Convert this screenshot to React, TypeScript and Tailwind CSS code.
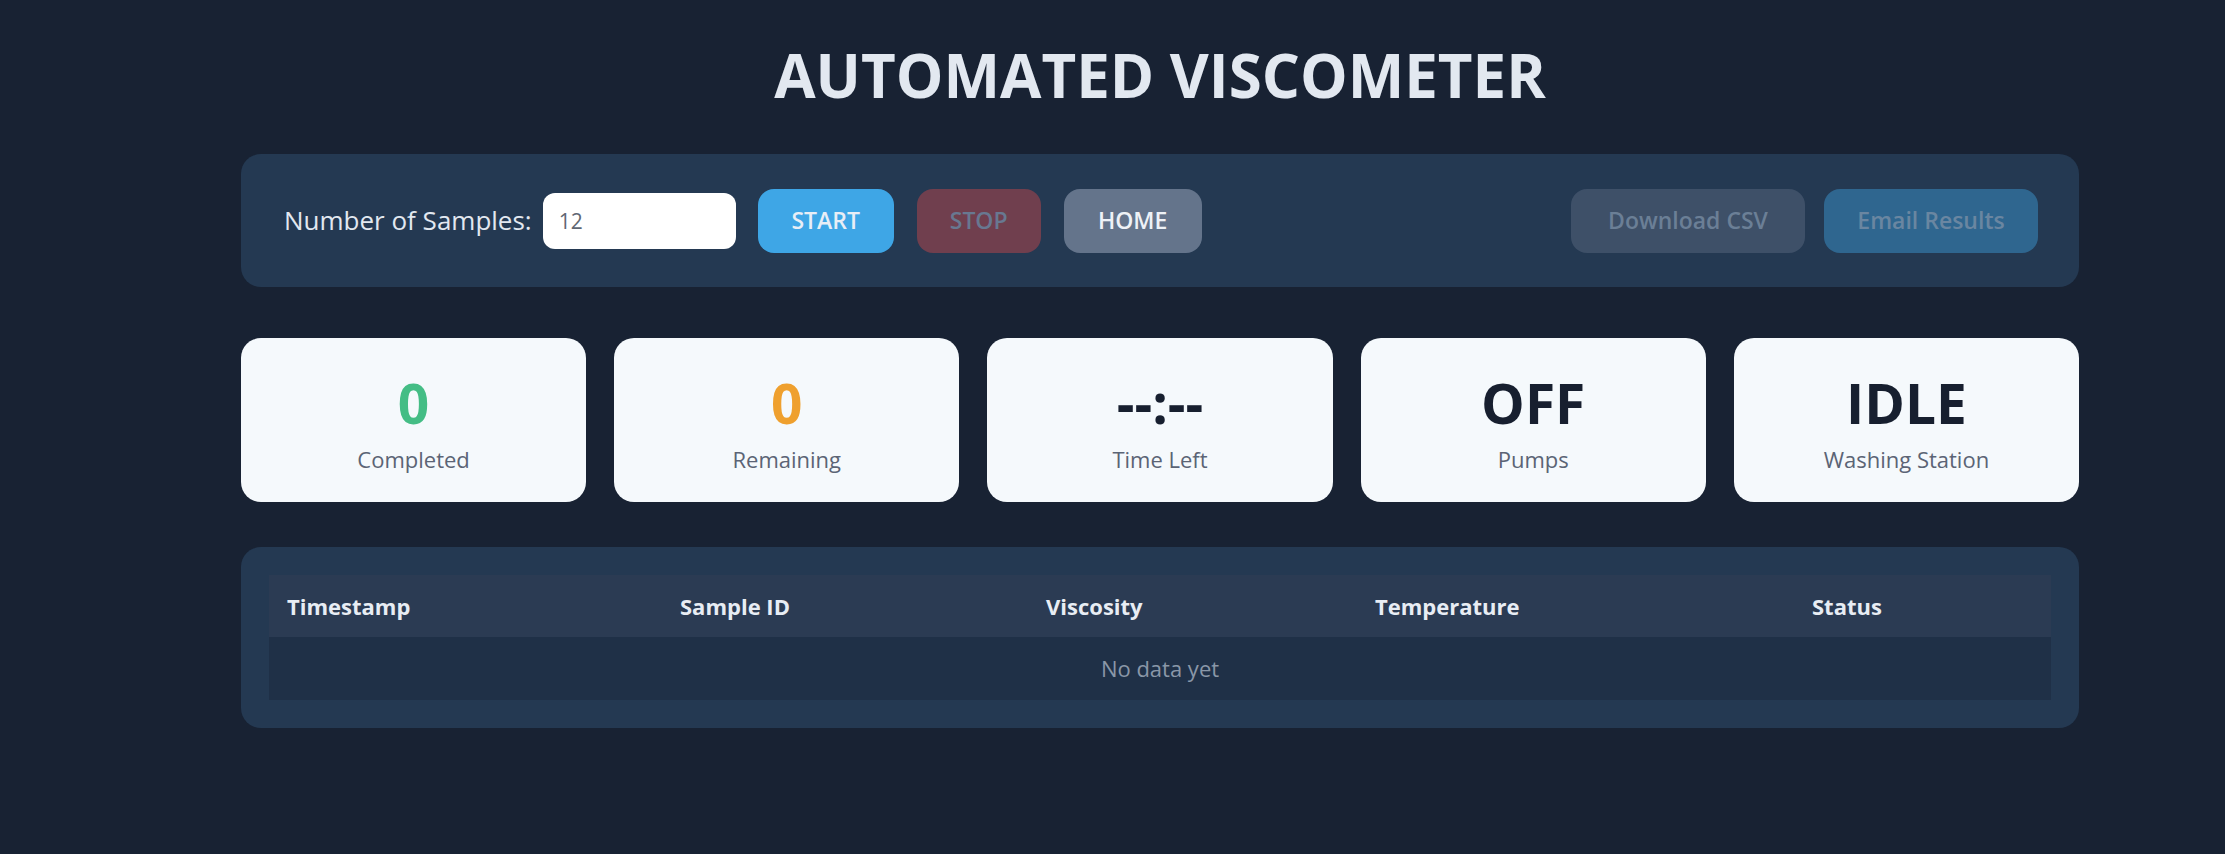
import React, { useState } from 'react';

interface Stat {
  value: string;
  label: string;
  color: string;
}

const STATS: Stat[] = [
  { value: '0', label: 'Completed', color: 'text-[#44bd85]' },
  { value: '0', label: 'Remaining', color: 'text-[#efa02e]' },
  { value: '--:--', label: 'Time Left', color: 'text-[#171f2f]' },
  { value: 'OFF', label: 'Pumps', color: 'text-[#171f2f]' },
  { value: 'IDLE', label: 'Washing Station', color: 'text-[#171f2f]' },
];

const COLUMNS = [
  { name: 'Timestamp', width: 'w-[393px]' },
  { name: 'Sample ID', width: 'w-[366px]' },
  { name: 'Viscosity', width: 'w-[329px]' },
  { name: 'Temperature', width: 'w-[437px]' },
  { name: 'Status', width: '' },
];

const App: React.FC = () => {
  const [samples, setSamples] = useState('12');

  return (
    <div className="min-h-screen w-full bg-[#182233] font-['Open_Sans',sans-serif] pt-[45px] pb-[60px]">
      <div className="ml-[241px] w-[1838px]">
        <h1 className="text-center text-[60px] leading-none font-bold text-[#e2e8f0]">
          AUTOMATED VISCOMETER
        </h1>

        {/* controls */}
        <div className="mt-[49px] h-[133px] bg-[#243952] rounded-[20px] pl-[43px] pr-[41px] flex items-center">
          <label className="text-[26px] text-[#e2e8f0] mr-[11px]">Number of Samples:</label>
          <input
            type="text"
            value={samples}
            onChange={e => setSamples(e.target.value)}
            className="w-[193px] h-[56px] bg-white rounded-[12px] px-[16px] text-[21px] text-[#5f6773] outline-none"
          />
          <button className="ml-[22px] w-[136px] h-[64px] rounded-[16px] bg-[#3ea6e6] text-[#e8eef6] text-[23px] font-semibold">
            START
          </button>
          <button disabled className="ml-[23px] w-[124px] h-[64px] rounded-[16px] bg-[#703f4e] text-[#687891] text-[23px] font-semibold">
            STOP
          </button>
          <button className="ml-[23px] w-[138px] h-[64px] rounded-[16px] bg-[#64748b] text-[#eef2f7] text-[23px] font-semibold">
            HOME
          </button>
          <div className="flex-1" />
          <button disabled className="w-[234px] h-[64px] rounded-[16px] bg-[#3e5068] text-[#6b7f96] text-[23px] font-semibold">
            Download CSV
          </button>
          <button disabled className="ml-[19px] w-[214px] h-[64px] rounded-[16px] bg-[#2f668f] text-[#6a86a1] text-[23px] font-semibold">
            Email Results
          </button>
        </div>

        {/* stats */}
        <div className="mt-[51px] grid grid-cols-5 gap-[28px]">
          {STATS.map(s => (
            <div key={s.label} className="h-[164px] bg-[#f5f9fc] rounded-[20px] flex flex-col items-center justify-center gap-[18px] pt-[4px]">
              <div className={`text-[55px] leading-none font-bold ${s.color}`}>{s.value}</div>
              <div className="text-[22px] leading-none text-[#5b6475]">{s.label}</div>
            </div>
          ))}
        </div>

        {/* data table */}
        <div className="mt-[45px] bg-[#243952] rounded-[20px] p-[28px]">
          <table className="w-full border-collapse text-left">
            <thead>
              <tr className="bg-[#2b3b53] h-[62px]">
                {COLUMNS.map(c => (
                  <th key={c.name} className={`${c.width} px-[18px] text-[22px] font-bold text-[#e8edf4]`}>
                    {c.name}
                  </th>
                ))}
              </tr>
            </thead>
            <tbody>
              <tr className="bg-[#1f3047] h-[63px]">
                <td colSpan={5} className="text-center text-[22px] text-[#8a97a8]">
                  No data yet
                </td>
              </tr>
            </tbody>
          </table>
        </div>
      </div>
    </div>
  );
};

export default App;
